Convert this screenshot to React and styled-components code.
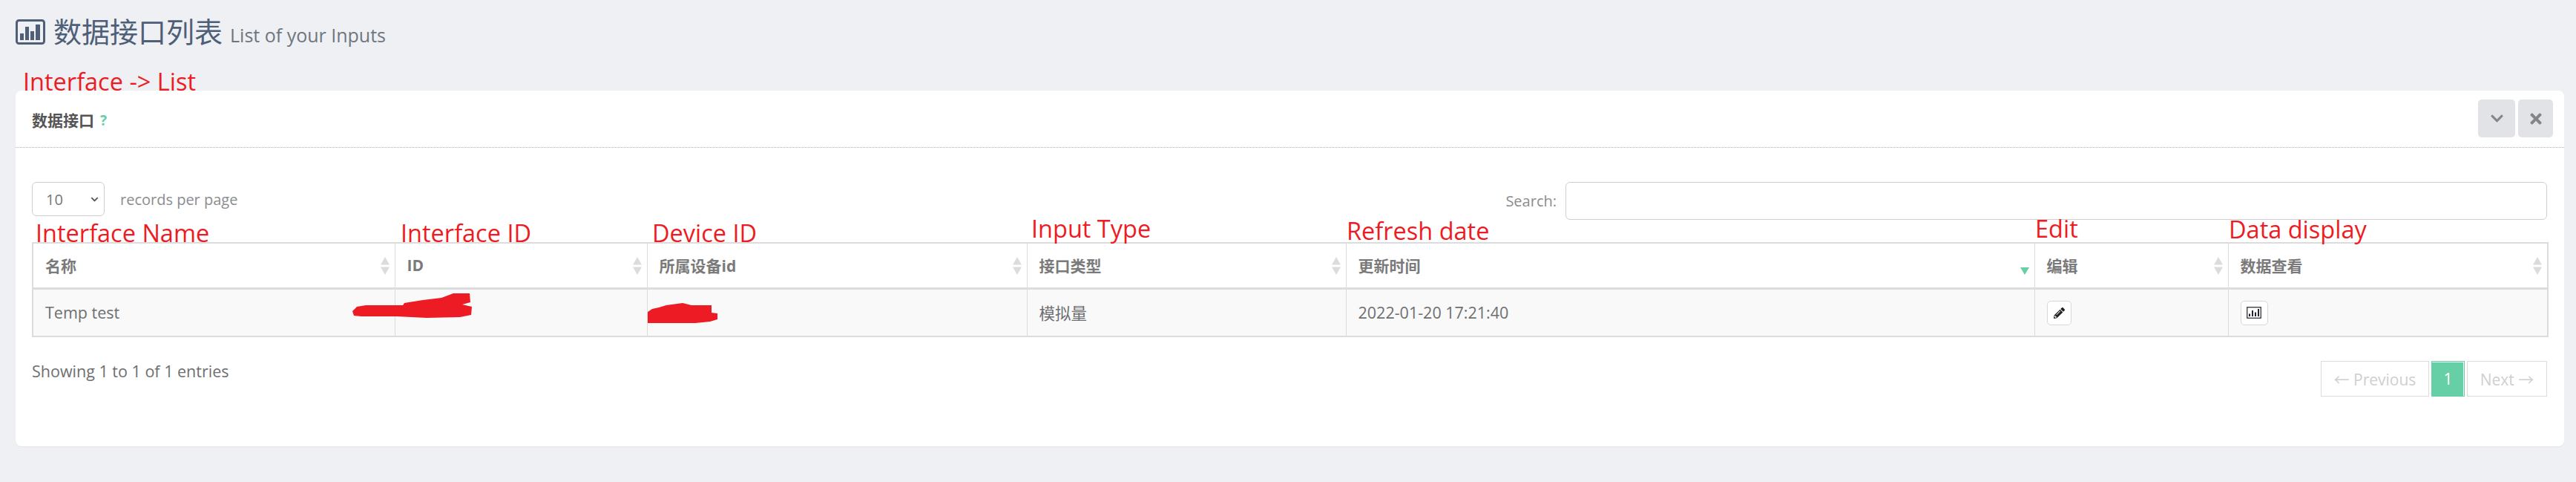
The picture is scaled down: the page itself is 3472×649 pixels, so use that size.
import React from 'react';
import styled, { createGlobalStyle } from 'styled-components';
import { FaChevronDown, FaTimes, FaPencilAlt } from 'react-icons/fa';

const SANS = `"Open Sans", "Noto Sans CJK SC", sans-serif`;

const Global = createGlobalStyle`
  html, body { margin: 0; padding: 0; background: #eef0f4; }
  body { font-family: ${SANS}; color: #676a6c; }
`;

const Page = styled.div`
  position: relative;
  width: 3472px;
  height: 649px;
  box-sizing: border-box;
  padding: 0 16px 0 21px;
  overflow: hidden;
`;

const Heading = styled.div`
  height: 122px;
  display: flex;
  align-items: baseline;
  padding-top: 23px;
  box-sizing: border-box;
`;
const HeadIcon = styled.svg`
  width: 40px;
  height: 34px;
  align-self: flex-start;
  margin-top: 3px;
  color: #4f5f78;
`;
const Title = styled.h1`
  margin: 0 0 0 11px;
  font-size: 38px;
  line-height: 38px;
  font-weight: 400;
  color: #4f5f78;
`;
const Sub = styled.small`
  margin-left: 10px;
  font-size: 25px;
  line-height: 38px;
  color: #6e7680;
`;

const Panel = styled.section`
  height: 479px;
  background: #fff;
  border-radius: 8px;
  box-shadow: 0 1px 1px rgba(0,0,0,.05);
`;
const PanelHead = styled.header`
  height: 77px;
  box-sizing: border-box;
  display: flex;
  align-items: flex-start;
  justify-content: space-between;
  padding: 12px 15px 0 22px;
  border-bottom: 1px dotted #b5b5b5;
`;
const PanelTitle = styled.h5`
  margin: 14px 0 0;
  font-size: 21px;
  line-height: 28px;
  font-weight: 700;
  color: #555;
  display: flex;
  gap: 8px;
`;
const Help = styled.span`
  color: #67cfa5;
  font-size: 19px;
`;
const Tools = styled.div`
  display: flex;
  gap: 4px;
`;
const ToolBtn = styled.button`
  width: ${p => p.$w}px;
  height: 51px;
  padding: 0;
  border: 0;
  border-radius: 5px;
  background: #e1e3e7;
  color: #858585;
  display: flex;
  align-items: center;
  justify-content: center;
  font-size: ${p => p.$size}px;
`;

const Body = styled.div`
  padding: 46px 23px 0 22px;
`;
const Controls = styled.div`
  display: flex;
  justify-content: space-between;
  align-items: flex-start;
  height: 81px;
`;
const Length = styled.label`
  display: flex;
  align-items: center;
  gap: 21px;
  height: 46px;
  font-size: 20px;
  color: #8a8d8f;
`;
const SelectWrap = styled.span`
  position: relative;
  display: block;
  width: 98px;
  height: 46px;
  color: #555;
  font-size: 11px;

  svg {
    position: absolute;
    right: 8px;
    top: 18px;
    pointer-events: none;
  }
`;
const Select = styled.select`
  width: 98px;
  height: 46px;
  padding: 0 18px;
  appearance: none;
  background: #fff;
  border: 1px solid #cfcfcf;
  border-radius: 6px;
  font: 400 20px ${SANS};
  color: #777;
`;
const SearchBox = styled.label`
  display: flex;
  align-items: center;
  gap: 12px;
  font-size: 20px;
  color: #8a8d8f;
`;
const SearchInput = styled.input`
  width: 1323px;
  height: 51px;
  box-sizing: border-box;
  background: #fff;
  border: 1px solid #cfcfcf;
  border-radius: 6px;
`;

const Table = styled.table`
  width: 3390px;
  table-layout: fixed;
  border-collapse: collapse;
  border: 2px solid #dcdcdc;
`;
const Th = styled.th`
  position: relative;
  height: 61px;
  padding: 0 16px;
  box-sizing: border-box;
  text-align: left;
  font-size: 21px;
  font-weight: 700;
  color: #7a7a7a;
  border-left: 1px solid #dcdcdc;
  border-bottom: 3px solid #dcdcdc;
  background: #fff;
`;
const Td = styled.td`
  height: 65px;
  padding: 0 16px;
  box-sizing: border-box;
  font-size: 21.5px;
  color: #6d6f71;
  background: #f9f9f9;
  border-left: 1px solid #dcdcdc;
`;
const Sort = styled.svg`
  position: absolute;
  right: 6px;
  top: 18px;
  width: 14px;
  height: 24px;
`;
const IconBtn = styled.span`
  display: inline-flex;
  align-items: center;
  justify-content: center;
  width: ${p => p.$w}px;
  height: 33px;
  box-sizing: border-box;
  vertical-align: middle;
  background: #fff;
  border: 1px solid #d8d8d8;
  border-radius: 5px;
  color: #222;
  font-size: 15px;
`;

const Footer = styled.div`
  display: flex;
  justify-content: space-between;
  align-items: flex-start;
  padding-top: 32px;
`;
const Info = styled.div`
  font-size: 21.5px;
  line-height: 28px;
  color: #6d6f71;
`;
const Pager = styled.nav`
  display: flex;
  gap: 3px;
`;
const PageBtn = styled.span`
  display: flex;
  align-items: center;
  justify-content: center;
  width: ${p => p.$w}px;
  height: 48px;
  box-sizing: border-box;
  font-size: 21px;
  border: 1px solid ${p => (p.$on ? '#67cfa5' : '#dcdcdc')};
  color: ${p => (p.$on ? '#fff' : '#cfcfcf')};
  background: ${p => (p.$on ? '#67cfa5' : '#fff')};
  box-shadow: ${p => (p.$on ? 'inset -1px 1px 0 #fff' : 'none')};
`;

const Note = styled.div`
  position: absolute;
  left: ${p => p.$x}px;
  top: ${p => p.$y}px;
  font-family: "Open Sans", sans-serif;
  font-size: 32.5px;
  line-height: 44px;
  color: #ed1c24;
  white-space: nowrap;
`;
const Scribble = styled.svg`
  position: absolute;
  left: ${p => p.$x}px;
  top: ${p => p.$y}px;
  width: ${p => p.$w}px;
  height: ${p => p.$h}px;
`;

const ChartIcon = () => (
  <HeadIcon viewBox="0 0 40 34">
    <rect x="1.5" y="1.5" width="37" height="31" rx="3" fill="none" stroke="currentColor" strokeWidth="3" />
    <rect x="6" y="19" width="5" height="9" fill="currentColor" />
    <rect x="13" y="10" width="5" height="18" fill="currentColor" />
    <rect x="20" y="16" width="5" height="12" fill="currentColor" />
    <rect x="27" y="7" width="6" height="21" fill="currentColor" />
  </HeadIcon>
);

const SmallChart = () => (
  <svg width="20" height="16" viewBox="0 0 20 16">
    <rect x="0.75" y="0.75" width="18.5" height="14.5" fill="none" stroke="#222" strokeWidth="1.2" />
    <rect x="3" y="9.5" width="2" height="3.5" fill="#223" />
    <rect x="7" y="5" width="2" height="8" fill="#223" />
    <rect x="11" y="7.5" width="2" height="5.5" fill="#223" />
    <rect x="15" y="3" width="2" height="10" fill="#223" />
  </svg>
);

const SortMark = ({ active }) => (
  <Sort viewBox="0 0 14 24">
    {active ? (
      <path d="M1 14h12l-6 10z" fill="#67cfa5" />
    ) : (
      <>
        <path d="M1 10.5h12L7 0z" fill="#dcdcdc" />
        <path d="M1 13.5h12L7 24z" fill="#dcdcdc" />
      </>
    )}
  </Sort>
);

const columns = [
  { name: '名称', width: 488 },
  { name: 'ID', width: 340 },
  { name: '所属设备id', width: 512 },
  { name: '接口类型', width: 430 },
  { name: '更新时间', width: 928, active: true },
  { name: '编辑', width: 261 },
  { name: '数据查看', width: 431 },
];

const notes = [
  ['Interface -> List', 31, 88],
  ['Interface Name', 48, 292],
  ['Interface ID', 540, 292],
  ['Device ID', 879, 292],
  ['Input Type', 1390, 286],
  ['Refresh date', 1815, 289],
  ['Edit', 2743, 286],
  ['Data display', 3004, 287],
];

export default function App() {
  return (
    <Page>
      <Global />
      <Heading>
        <ChartIcon />
        <Title>数据接口列表</Title>
        <Sub>List of your Inputs</Sub>
      </Heading>
      <Panel>
        <PanelHead>
          <PanelTitle>数据接口<Help>?</Help></PanelTitle>
          <Tools>
            <ToolBtn $w={50} $size={19}><FaChevronDown /></ToolBtn>
            <ToolBtn $w={47} $size={22}><FaTimes /></ToolBtn>
          </Tools>
        </PanelHead>
        <Body>
          <Controls>
            <Length>
              <SelectWrap>
                <Select defaultValue="10"><option>10</option></Select>
                <FaChevronDown />
              </SelectWrap>
              records per page
            </Length>
            <SearchBox>
              Search:
              <SearchInput />
            </SearchBox>
          </Controls>
          <Table>
            <colgroup>
              {columns.map(c => <col key={c.name} style={{ width: c.width }} />)}
            </colgroup>
            <thead>
              <tr>
                {columns.map(c => (
                  <Th key={c.name}>{c.name}<SortMark active={c.active} /></Th>
                ))}
              </tr>
            </thead>
            <tbody>
              <tr>
                <Td>Temp test</Td>
                <Td />
                <Td />
                <Td>模拟量</Td>
                <Td>2022-01-20 17:21:40</Td>
                <Td><IconBtn $w={33}><FaPencilAlt /></IconBtn></Td>
                <Td><IconBtn $w={37}><SmallChart /></IconBtn></Td>
              </tr>
            </tbody>
          </Table>
          <Footer>
            <Info>Showing 1 to 1 of 1 entries</Info>
            <Pager>
              <PageBtn $w={146}>← Previous</PageBtn>
              <PageBtn $w={45} $on>1</PageBtn>
              <PageBtn $w={108}>Next →</PageBtn>
            </Pager>
          </Footer>
        </Body>
      </Panel>
      {notes.map(([text, x, y]) => <Note key={text} $x={x} $y={y}>{text}</Note>)}
      <Scribble $x={475} $y={395} $w={161} $h={33} viewBox="0 0 161 33">
        <path d="M0 24 L6 18 L18 16 L68 16 L70 13 L95 9 L120 6 L136 0 L158 0 L159 12 L148 15 L161 18 L160 29 L145 32 L100 33 L60 31 L12 31 L2 30 Z" fill="#ed1c24" />
      </Scribble>
      <Scribble $x={873} $y={408} $w={94} $h={27} viewBox="0 0 94 27">
        <path d="M0 27 L0 12 L6 8 L15 6 L25 3 L47 0 L59 3 L86 3 L86 13 L94 14 L94 22 L84 25 L64 27 Z" fill="#ed1c24" />
      </Scribble>
    </Page>
  );
}
